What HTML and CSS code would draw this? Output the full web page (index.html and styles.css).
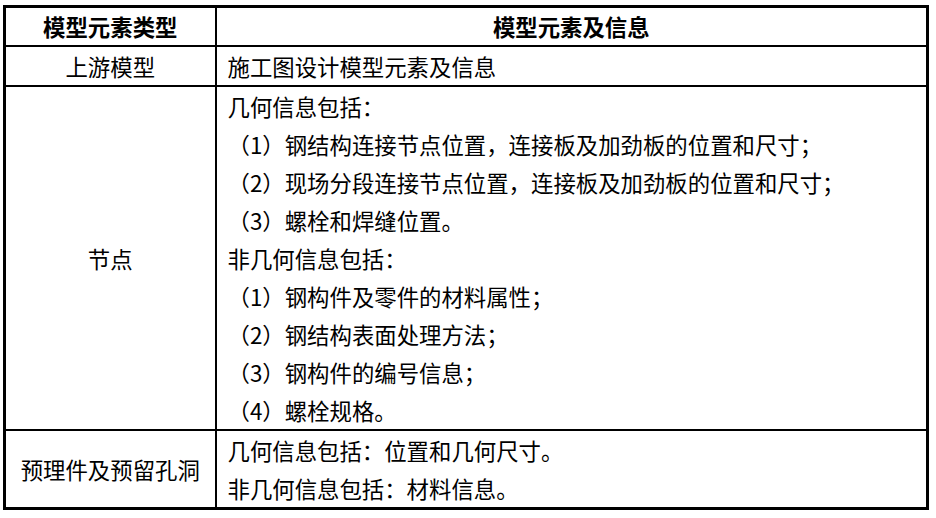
FILE: index.html
```html
<!DOCTYPE html>
<html lang="zh-CN">
<head>
<meta charset="utf-8">
<link rel="stylesheet" href="styles.css">
</head>
<body>
<table class="spec">
  <colgroup><col class="c1"><col class="c2"></colgroup>
  <thead>
    <tr><th>模型元素类型</th><th>模型元素及信息</th></tr>
  </thead>
  <tbody>
    <tr><td class="type">上游模型</td><td class="info">施工图设计模型元素及信息</td></tr>
    <tr>
      <td class="type">节点</td>
      <td class="info">
        <div>几何信息包括：</div>
        <div>（1）钢结构连接节点位置，连接板及加劲板的位置和尺寸；</div>
        <div>（2）现场分段连接节点位置，连接板及加劲板的位置和尺寸；</div>
        <div>（3）螺栓和焊缝位置。</div>
        <div>非几何信息包括：</div>
        <div>（1）钢构件及零件的材料属性；</div>
        <div>（2）钢结构表面处理方法；</div>
        <div>（3）钢构件的编号信息；</div>
        <div>（4）螺栓规格。</div>
      </td>
    </tr>
    <tr>
      <td class="type">预理件及预留孔洞</td>
      <td class="info">
        <div>几何信息包括：位置和几何尺寸。</div>
        <div>非几何信息包括：材料信息。</div>
      </td>
    </tr>
  </tbody>
</table>
</body>
</html>
```
FILE: styles.css
```css
html, body {
  margin: 0;
  padding: 0;
  background: #fff;
}
body {
  padding: 5px 0 0 3px;
  font-family: "Noto Sans CJK SC", "Noto Sans", sans-serif;
  color: #000;
}
.spec {
  border-collapse: collapse;
  width: 926px;
  border: 3px solid #000;
  font-size: 22.4px;
  line-height: 38px;
}
.c1 { width: 211px; }
.spec th, .spec td {
  border: 2px solid #000;
  padding: 0;
  vertical-align: middle;
}
.spec th {
  font-weight: bold;
  text-align: center;
  height: 37px;
  line-height: 37px;
}
.spec td.type {
  text-align: center;
}
.spec td.info {
  text-align: left;
  padding-left: 11px;
}
```
